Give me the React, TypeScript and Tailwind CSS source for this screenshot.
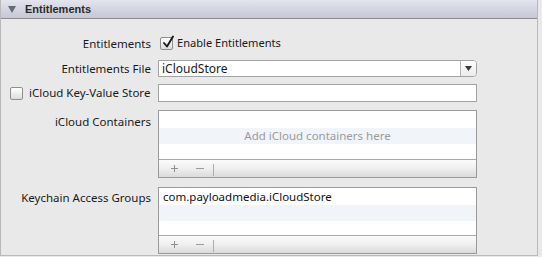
import React from "react";

const font = { fontFamily: '"Lucida Grande", "Noto Sans", "DejaVu Sans", sans-serif' };

function Check({ checked }: { checked: boolean }) {
  return (
    <div className="relative w-[13px] h-[13px] rounded-[2px] border border-[#8f8f8f] bg-gradient-to-b from-[#ffffff] to-[#dcdcdc] shrink-0">
      {checked && (
        <svg className="absolute left-[1px] -top-[3px]" width="13" height="14" viewBox="0 0 13 14">
          <path d="M2 8 L5 11.5 L11 1.5" fill="none" stroke="#1a1a1a" strokeWidth="1.9" strokeLinecap="round" strokeLinejoin="round" />
        </svg>
      )}
    </div>
  );
}

function TableBox({ h, children }: { h: string; children?: React.ReactNode }) {
  return (
    <div className={`flex flex-col border border-[#9a9a9a] bg-white ${h}`}>
      <div className="flex-1 flex flex-col">
        <div className="h-[17px] bg-white flex items-center px-[4px] text-[11.5px] text-[#111]">{children}</div>
        <div className="h-[16px] bg-[#f1f4f9]" />
        <div className="flex-1 bg-white" />
      </div>
      <div className="h-[18px] border-t border-[#a8a8a8] bg-gradient-to-b from-[#fbfbfb] via-[#efefef] to-[#dadada] flex items-center">
        <svg className="ml-[12px]" width="7" height="7" viewBox="0 0 7 7">
          <path d="M3.5 0 V7 M0 3.5 H7" stroke="#8e8e8e" strokeWidth="1" />
        </svg>
        <svg className="ml-[18px]" width="8" height="7" viewBox="0 0 8 7">
          <path d="M0 3.5 H8" stroke="#9a9a9a" strokeWidth="1" />
        </svg>
        <span className="ml-[9px] w-px h-[12px] bg-[#aeaeae] mt-[2px]" />
      </div>
    </div>
  );
}

export default function App() {
  return (
    <div className="w-[542px] h-[257px] bg-[#e9e9e9] flex overflow-hidden" style={font}>
      <div className="w-[538px] h-[256px] border-l border-[#a6a6a6] border-r border-[#b9b9b9] border-b border-[#8d8d8d] flex flex-col">
        <div className="h-[19px] border-b border-[#8e8e8e] bg-gradient-to-b from-[#e3e4ee] to-[#c5c7d5] flex items-center">
          <svg className="ml-[7px] mr-[9px]" width="8" height="7" viewBox="0 0 8 7">
            <path d="M0 0 H8 L4 7 Z" fill="#666a74" />
          </svg>
          <span className="text-[11px] font-bold text-[#2a2a2a]" style={{ fontFamily: '"Liberation Sans", Arial, sans-serif' }}>Entitlements</span>
        </div>
        <div className="flex flex-col text-[11.5px] text-[#1a1a1a]">
          <div className="flex items-center mt-[17px] h-[15px]">
            <div className="w-[150px] text-right">Entitlements</div>
            <div className="ml-[9px] flex items-center gap-[4px]">
              <Check checked />
              <span className="text-[11.1px]">Enable Entitlements</span>
            </div>
          </div>
          <div className="flex items-center mt-[9px] h-[17px]">
            <div className="w-[150px] text-right">Entitlements File</div>
            <div className="ml-[7px] w-[319px] h-[17px] flex border border-[#a3a3a3] rounded-r-[4px] bg-white">
              <div className="flex-1 flex items-center pl-[3px] text-[12px]">iCloudStore</div>
              <div className="w-[16px] border-l border-[#b5b5b5] rounded-r-[3px] bg-gradient-to-b from-[#fdfdfd] to-[#ececec] flex items-center justify-center">
                <svg width="7" height="5" viewBox="0 0 7 5"><path d="M0 0 H7 L3.5 5 Z" fill="#3a3a3a" /></svg>
              </div>
            </div>
          </div>
          <div className="flex items-center mt-[7px] h-[18px]">
            <div className="w-[150px] flex items-center">
              <div className="ml-[9px]"><Check checked={false} /></div>
              <span className="ml-[6px]">iCloud Key-Value Store</span>
            </div>
            <div className="ml-[7px] w-[319px] h-[18px] border border-[#a3a3a3] bg-white" />
          </div>
          <div className="flex items-start mt-[8px]">
            <div className="w-[150px] text-right mt-[3px]">iCloud Containers</div>
            <div className="ml-[7px] w-[319px] relative">
              <TableBox h="h-[68px]" />
              <div className="absolute left-0 right-0 top-[18px] h-[16px] flex items-center justify-center text-[11.5px] text-[#9b9b9b]">Add iCloud containers here</div>
            </div>
          </div>
          <div className="flex items-start mt-[9px]">
            <div className="w-[150px] text-right mt-[2px]">Keychain Access Groups</div>
            <div className="ml-[7px] w-[319px]">
              <TableBox h="h-[67px]">com.payloadmedia.iCloudStore</TableBox>
            </div>
          </div>
        </div>
      </div>
    </div>
  );
}
